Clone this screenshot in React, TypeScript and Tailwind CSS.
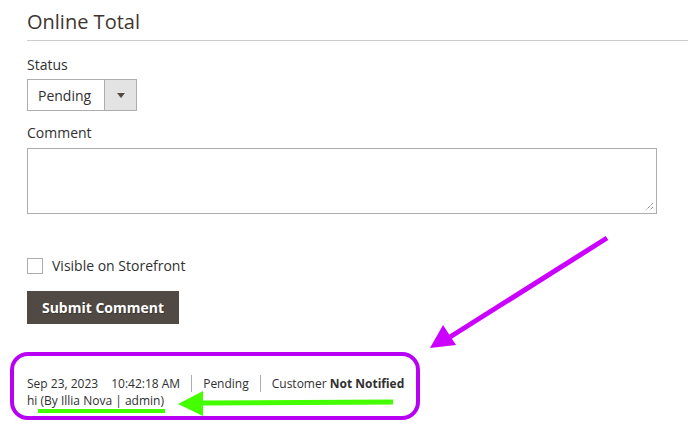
import React from "react";

export default function App() {
  return (
    <div
      className="relative w-[688px] h-[432px] overflow-hidden bg-white text-[#303030]"
      style={{ fontFamily: '"Open Sans", "Noto Sans", sans-serif' }}
    >
      <div className="pl-[27px] pt-[10px]">
        <h2 className="text-[20px] leading-[24px] font-normal text-[#41362f]">Online Total</h2>
        <div className="mt-[6px] h-px bg-[#cccccc]" />
        <div className="mt-[14px] text-[14px] leading-[20px]">Status</div>
        <div className="mt-[4px] flex h-[32px] w-[110px] border border-[#adadad]">
          <div className="flex flex-1 items-center pl-[10px] text-[14px]">Pending</div>
          <div className="flex w-[32px] items-center justify-center border-l border-[#adadad] bg-[#e3e3e3]">
            <svg width="8" height="5" viewBox="0 0 8 5">
              <path d="M0 0 H8 L4 5 Z" fill="#514943" />
            </svg>
          </div>
        </div>
        <div className="mt-[12px] text-[14px] leading-[20px]">Comment</div>
        <div className="mt-[5px] relative h-[66px] w-[630px] border border-[#adadad]">
          <svg className="absolute right-[2px] bottom-[2px]" width="9" height="9" viewBox="0 0 9 9">
            <path d="M8 1 L1 8 M8 5 L5 8" stroke="#555" strokeWidth="1" strokeDasharray="1 1" />
          </svg>
        </div>
        <div className="mt-[42px] flex items-center gap-[9px]">
          <div className="h-[16px] w-[16px] border border-[#adadad] bg-white" />
          <span className="text-[14px] leading-[20px]">Visible on Storefront</span>
        </div>
        <button className="mt-[15px] flex h-[33px] w-[152px] items-center justify-center bg-[#514943] text-[14px] font-bold text-white [text-shadow:1px_1px_0_rgba(0,0,0,0.3)]">
          Submit Comment
        </button>
        <div className="mt-[51px] text-[12px] leading-[17px]">
          <div className="flex items-center">
            <span>Sep 23, 2023</span>
            <span className="ml-[13px]">10:42:18 AM</span>
            <span className="mx-[11px] h-[17px] w-px bg-[#adadad]" />
            <span>Pending</span>
            <span className="mx-[11px] h-[17px] w-px bg-[#adadad]" />
            <span>
              Customer <b className="font-bold">Not Notified</b>
            </span>
          </div>
          <div>hi (By Illia Nova | admin)</div>
        </div>
      </div>
      <svg className="pointer-events-none absolute inset-0" width="688" height="432" viewBox="0 0 688 432">
        <rect x="12" y="354" width="406" height="64" rx="16" fill="none" stroke="#b800f5" strokeWidth="4" />
        <line x1="607" y1="238" x2="450" y2="337" stroke="#cc00ff" strokeWidth="5" />
        <polygon points="430,348 443,325 456,345" fill="#cc00ff" />
        <line x1="38" y1="411" x2="165" y2="411" stroke="#44ff00" strokeWidth="4" />
        <line x1="200" y1="403" x2="393" y2="402" stroke="#44ff00" strokeWidth="5" />
        <polygon points="178,404 203,391 203,416" fill="#44ff00" />
      </svg>
    </div>
  );
}
